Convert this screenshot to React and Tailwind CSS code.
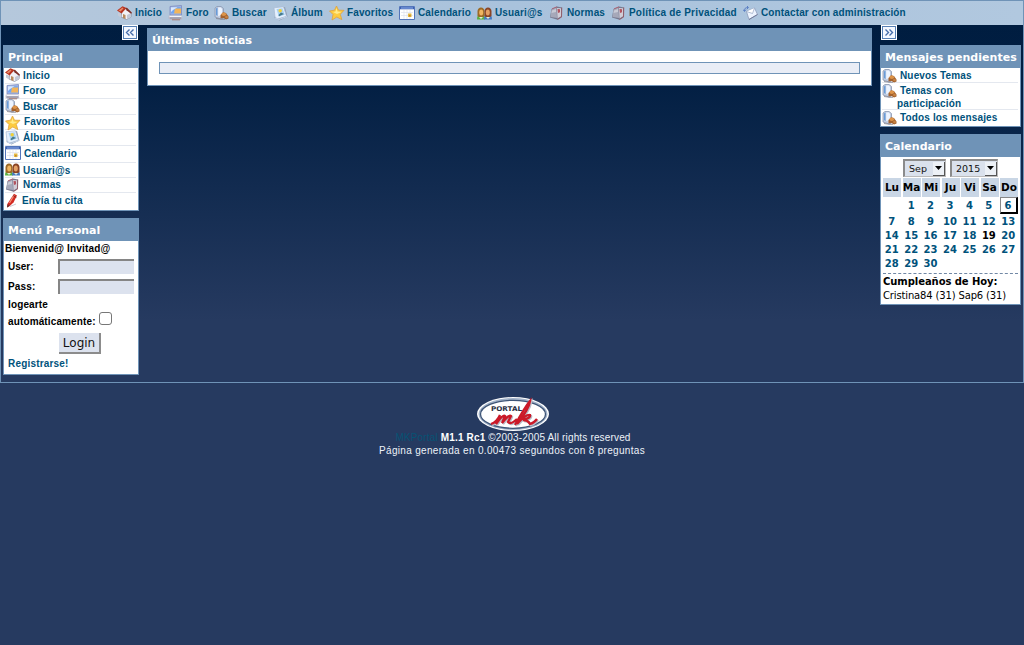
import React from "react";

const House = () => (
  <svg width="15" height="14" viewBox="0 0 15 14" className="block">
    <path d="M5 5 9 2.500 14.500 7 14 11 9.500 13.500 4 11z" fill="#f1f1f5" stroke="#83889a" strokeWidth=".7" />
    <path d="m10 9 4-2v4l-4 2.300z" fill="#c3c8d6" />
    <path d="M0 4.500 5.500.3 9.500 2 4.500 7.500z" fill="#b93420" />
    <path d="M1.500 4.500 5.500 1.500 6.500 2.500 3.500 5.500z" fill="#e58a6c" />
    <path d="M8.500 2 10 1.700l5 5-1 1-4.500-3.500z" fill="#7e3028" />
    <path d="m6 8 2.500 1v4L6 12z" fill="#b98a5c" />
    <path d="M1 6.500v3l3 2V7.500z" fill="#c7cbd8" />
  </svg>
);

const Forum = () => (
  <svg width="15" height="16" viewBox="0 0 15 16" className="block">
    <path d="M2 1.500 13.500.5v9.500H2z" fill="#a5b6e3" stroke="#7b8cc0" strokeWidth=".8" />
    <path d="M3 2.200h9.800v6.300H3z" fill="#70a6f2" />
    <path d="M7 3.500h6v5H6z" fill="#f3b55a" />
    <path d="M3 2.200h6.500L5 5 3 7z" fill="#dbe9ff" />
    <path d="M.8 10.500h12.700l.8 3.500-2 1H3L.5 13.500z" fill="#b9b6c4" />
    <path d="M1.500 11.500h12" stroke="#f3f3f8" strokeWidth="1.300" />
    <path d="M2 13h11" stroke="#8e8a9c" />
    <path d="M4 14.800h8" stroke="#a67b70" />
  </svg>
);

const Search = () => (
  <svg width="15" height="14" viewBox="0 0 15 14" className="block">
    <path d="M1 2 3 .5h4l2.500 2V12L7 13 1 11z" fill="#c2cee2" stroke="#8a97b0" strokeWidth=".8" />
    <path d="M2 2.500 3.500 1.500v8.500L2 9z" fill="#679bd9" />
    <path d="M4.200 1.500H7l1 1.300V9l-3.800 1z" fill="#edf4ff" />
    <path d="m6.500 9 2.500-2.800 3 .8 2.500 3.500v2L12 13.500 9.500 12l-3 .5z" fill="#a3622e" />
    <ellipse cx="9.800" cy="8.300" rx="2.300" ry="1.800" fill="#dd9449" />
    <ellipse cx="12.500" cy="11" rx="1.400" ry="1.200" fill="#c68343" />
    <path d="m2 12.500 6 .8h3" fill="none" stroke="#82818d" strokeWidth=".8" />
  </svg>
);

const Star = () => (
  <svg width="16" height="16" viewBox="0 0 16 16" className="block">
    <path d="m7.500 1 2 4.200 5.500.1-3.700 4 1.500 5.300-5-2.600L3 15l1-5.500L.5 6l5-.8z" fill="#fccb40" stroke="#dfa23e" strokeWidth=".8" />
    <path d="M7.500 3 8.500 6.500 12.500 7 8 9l-4-2 2.500-.6z" fill="#ffeb8c" />
  </svg>
);

const Album = () => (
  <svg width="15" height="15" viewBox="0 0 15 15" className="block">
    <path d="m3 4 9-3 2.500 9.500-8 4L1.500 12z" fill="#8f9db2" />
    <path d="M1 1.800 10.500.8l3 9.500-9 2.700L2 11z" fill="#e5f0fd" stroke="#a7b9d2" strokeWidth=".7" />
    <path d="m3.500 3 6-.7 2.300 6.500-6 1.800z" fill="#a8d1f3" />
    <circle cx="7.200" cy="4.800" r="1.700" fill="#f1cf35" />
    <path d="m5.500 9 2.500-2.500L11 8l-5 2.200z" fill="#467a8d" />
    <path d="m2 12 4 1.500 8-3" fill="none" stroke="#c4d5eb" />
  </svg>
);

const Calendar = () => (
  <svg width="16" height="14" viewBox="0 0 16 14" className="block">
    <path d="M.5.500h15v13H.5z" fill="#fff" stroke="#5375ba" />
    <path d="M1 1h14v2.300H1z" fill="#3c61b1" />
    <path d="M2 2h12" stroke="#91b0ec" />
    <path d="M2 6.500h12M2 9.500h12M5 4v9M8 4v9M11 4v9" stroke="#dde1ec" strokeWidth=".7" />
    <path d="M9 7.500h3.500V11H9z" fill="#e5b940" />
    <path d="M10 9h1.500v1.500H10z" fill="#bd842c" />
  </svg>
);

const Users = () => (
  <svg width="15" height="13" viewBox="0 0 15 13" className="block">
    <path d="M0 12.500Q0 7 4 7t4 5.500z" fill="#5bb041" />
    <path d="M7 12.500Q7 7 11 7t4 5.500z" fill="#4579c1" />
    <path d="M.5 9V4Q1 .5 4 .5T7.500 4v5L6 10H2z" fill="#9c6a26" />
    <path d="M7.500 9V4Q8 .5 11 .5T14.500 4v5L13 10H9z" fill="#8a4426" />
    <ellipse cx="4.200" cy="5.500" rx="2" ry="3" fill="#efb561" />
    <ellipse cx="10.800" cy="5.500" rx="2" ry="3" fill="#e3a066" />
    <path d="M2 10h4l-2 2zm7 0h4l-2 2z" fill="#e6edd7" />
  </svg>
);

const Rules = () => (
  <svg width="14" height="14" viewBox="0 0 14 14" className="block">
    <path d="M2.500 3 8 .5l5 1V11l-4.500 2.800L1 11.500z" fill="#77798f" />
    <path d="m2.500 3.500 5-2.200L8 12l-6.500-1z" fill="#a6a8b9" />
    <path d="M3 4.500 7 3v3L2.500 7z" fill="#c8cad5" />
    <path d="m8 2 4 .3v8L8.500 12.500z" fill="#d1cdd7" />
    <path d="m8.500 3 2.500.2v3L9 7z" fill="#b3535f" />
    <path d="m12.800 1.500-.3 9.500-4 2.500" fill="none" stroke="#9b5761" strokeWidth=".8" />
    <path d="m3 2.800 5-2" stroke="#b2596a" strokeWidth=".8" />
  </svg>
);

const Pen = () => (
  <svg width="14" height="15" viewBox="0 0 14 15" className="block">
    <path d="m5 13.500 6-2.500" stroke="#c9c9d2" />
    <path d="m9 .8 3 1.700L8.500 9.500 5 12.800 2 14.500l.5-3.700z" fill="#d32b22" />
    <path d="m9.200 2-4.700 8" stroke="#f5937d" strokeWidth="1.200" />
    <path d="m8 2.500 3.300 2" stroke="#8e2922" />
    <path d="m2.500 11-.5 3.500 2.700-1.500z" fill="#6d3332" />
  </svg>
);

const Mail = () => (
  <svg width="15" height="14" viewBox="0 0 15 14" className="block">
    <path d="m3.500 5.500 8-3.500 3 6.500-8.500 5z" fill="#edf4ff" stroke="#8794b3" strokeWidth=".7" />
    <path d="m3.500 5.500 6 2L11.500 2" fill="#fff" stroke="#94a4c1" strokeWidth=".7" />
    <path d="M1.500 5Q1 1.500 5 1.500M4 0l1.500 1.500L4 3M0 3.500l1.500 2 1.500-2" fill="none" stroke="#5c80c4" />
    <path d="m6 13.500 8.500-5" stroke="#727b99" />
  </svg>
);

const NAV = [
  [House, "Inicio", "w-[51px]", "w-[18px]"],
  [Forum, "Foro", "w-[46px]", "w-[18px]"],
  [Search, "Buscar", "w-[59px]", "w-[18px]"],
  [Album, "Álbum", "w-[56px]", "w-[18px]"],
  [Star, "Favoritos", "w-[70px]", "w-[18px]"],
  [Calendar, "Calendario", "w-[78px]", "w-[19px]"],
  [Users, "Usuari@s", "w-[72px]", "w-[18px]"],
  [Rules, "Normas", "w-[62px]", "w-[18px]"],
  [Rules, "Política de Privacidad", "w-[132px]", "w-[18px]"],
  [Mail, "Contactar con administración", "w-[164px]", "w-[18px]"],
];

const MENU = [
  [House, "Inicio", "h-[16px]", "w-[18px]", "pt-px"],
  [Forum, "Foro", "h-[15px]", "w-[18px]", "pt-0"],
  [Search, "Buscar", "h-[16px]", "w-[18px]", "pt-px"],
  [Star, "Favoritos", "h-[15px]", "w-[19px]", "pt-0"],
  [Album, "Álbum", "h-[16px]", "w-[18px]", "pt-px"],
  [Calendar, "Calendario", "h-[17px]", "w-[19px]", "pt-px"],
  [Users, "Usuari@s", "h-[15px]", "w-[18px]", "pt-px"],
  [Rules, "Normas", "h-[15px]", "w-[18px]", "pt-0"],
  [Pen, "Envía tu cita", "h-[16px]", "w-[17px]", "pt-px"],
];

const WEEKS = [
  ["", 1, 2, 3, 4, 5, 6],
  [7, 8, 9, 10, 11, 12, 13],
  [14, 15, 16, 17, 18, 19, 20],
  [21, 22, 23, 24, 25, 26, 27],
  [28, 29, 30, "", "", "", ""],
];

const Panel = ({ title, className, children }) => (
  <section className={`flex flex-col border border-[#6f93b7] bg-white ${className}`}>
    <h2 className="h-[22px] shrink-0 whitespace-nowrap bg-[#6f93b7] pl-1 pt-px font-['DejaVu_Sans',sans-serif] text-[11px] font-bold leading-[21px] tracking-[0.03px] text-white">
      {title}
    </h2>
    {children}
  </section>
);

const Toggle = ({ flip }) => (
  <button className="flex h-[15px] w-4 items-center justify-center border border-white bg-[#557fb5] p-px">
    <svg width="12" height="11" viewBox="0 0 12 11" className={flip ? "-scale-x-100" : ""}>
      <path d="M0 0h12v11H0z" fill="#f4f8ff" />
      <path d="M5.500 2.500 2.500 5.500l3 3M9.500 2.500l-3 3 3 3" fill="none" stroke="#466daa" strokeWidth="1.400" />
    </svg>
  </button>
);

const Select = ({ value, className }) => (
  <div className={`flex h-[18px] items-center border-2 border-b border-r border-[#8b8b8b] border-b-[#bbb] border-r-[#bbb] bg-[#dae1ec] pl-1 font-['DejaVu_Sans',sans-serif] text-[9.500px] leading-none text-[#111] ${className}`}>
    <span className="flex-1">{value}</span>
    <span className="flex h-[14px] w-[12px] items-center justify-center border-b border-r border-[#555] bg-[#edf1f6]">
      <svg width="7" height="4" viewBox="0 0 7 4"><path d="M0 0h7L3.500 4z" /></svg>
    </span>
  </div>
);

const Logo = () => (
  <svg width="72" height="34" viewBox="0 0 72 34" className="block">
    <ellipse cx="36" cy="17" rx="36" ry="17" fill="#fff" />
    <ellipse cx="36" cy="17" rx="34.500" ry="16" fill="#a3b3c9" />
    <ellipse cx="36" cy="17.300" rx="32.500" ry="14" fill="#fff" stroke="#3e5577" strokeWidth="1.300" />
    <text x="14" y="14" fontFamily="DejaVu Sans" fontSize="6.500" fontWeight="bold" textLength="31" lengthAdjust="spacingAndGlyphs" fill="#293044">PORTAL</text>
    <path d="M14 27q6-2 9-9l-4 9q7-10 9-8l-3 7q7-9 9-7l-3 6q3 3 9-3M38 28Q48 10 53 4 52 12 40 27q9-10 13-9 1 3-7 5 5 0 7 4 4-1 7-5" fill="none" stroke="#b9bcc8" strokeWidth="2.400" transform="translate(1 1)" />
    <path d="M14 27q6-2 9-9l-4 9q7-10 9-8l-3 7q7-9 9-7l-3 6q3 3 9-3M38 28Q48 10 53 4 52 12 40 27q9-10 13-9 1 3-7 5 5 0 7 4 4-1 7-5" fill="none" stroke="#cb1928" strokeWidth="2.300" />
  </svg>
);

export default function App() {
  return (
    <div className="h-[645px] w-[1024px] overflow-hidden bg-[#263a60] font-['Liberation_Sans',Arial,sans-serif] text-[10px] text-black">
      <div className="flex h-[383px] flex-col border border-[#6f93b7] bg-[linear-gradient(#001d40_24px,#021f43_80px,#263a60_320px)]">
        <nav className="flex h-6 shrink-0 items-center bg-[linear-gradient(90deg,#b5c8dc,#a9c2dc_50%,#b1c8df)] pl-[116px] font-bold tracking-[0.13px] text-[#00527b]">
          {NAV.map(([Icon, label, width, slot]) => (
            <a key={label} className={`flex shrink-0 items-center whitespace-nowrap ${width}`}>
              <span className={`shrink-0 ${slot}`}><Icon /></span>
              <span className={`leading-[12px] ${label.startsWith("Pol") ? "tracking-[0.2px]" : ""}`}>{label}</span>
            </a>
          ))}
        </nav>

        <div className="flex flex-1 items-start">
          <aside className="flex w-[144px] shrink-0 flex-col pl-[2px]">
            <div className="ml-[119px] h-5"><Toggle /></div>
            <Panel title="Principal" className="h-[166px] w-[136px]">
              <ul className="pl-px pr-0.5">
                {MENU.map(([Icon, label, height, slot, nudge]) => (
                  <li key={label} className={`flex border-b border-[#e4e8ef] font-bold tracking-[0.13px] text-[#00527b] last:border-b-0 ${height}`}>
                    <span className={`shrink-0 ${slot}`}><Icon /></span>
                    <span className={`leading-[13px] ${nudge}`}>{label}</span>
                  </li>
                ))}
              </ul>
            </Panel>
            <Panel title="Menú Personal" className="mt-[7px] h-[157px] w-[136px] font-bold">
              <p className="pl-px pt-0.5 leading-[12px] tracking-[0.16px]">Bienvenid@ Invitad@</p>
              <div className="mt-px flex h-5 items-center pl-1">
                <label className="w-[50px]">User:</label>
                <input className="h-[15px] w-[76px] border-2 border-b-0 border-r-0 border-[#858585] bg-[#dce2ee] outline-none" />
              </div>
              <div className="flex h-5 items-center pl-1">
                <label className="w-[50px] tracking-[0.15px]">Pass:</label>
                <input className="h-[15px] w-[76px] border-2 border-b-0 border-r-0 border-[#858585] bg-[#dce2ee] outline-none" />
              </div>
              <p className="pl-1 pt-0.5 leading-[14px] tracking-[0.13px]">logearte</p>
              <div className="flex h-[18px] pl-1">
                <span className="pt-[3px] leading-[14px] tracking-[0.13px]">automáticamente:</span>
                <span className="ml-[3px] h-[13px] w-[13px] rounded-[3px] border border-[#777] bg-white" />
              </div>
              <button className="ml-[55px] mt-[3px] h-[21px] w-[42px] shrink-0 border-b-2 border-r-2 border-[#8c8c8c] bg-[#dce2ee] font-['DejaVu_Sans',sans-serif] text-[12px] font-normal leading-[18px] text-[#111]">Login</button>
              <a className="mt-[3px] pl-1 leading-[13px] tracking-[0.18px] text-[#00527b]">Registrarse!</a>
            </Panel>
          </aside>

          <main className="mt-[3px] w-[735px] shrink-0 pl-[2px]">
            <Panel title="Últimas noticias" className="h-[58px] w-[725px]">
              <div className="ml-[11px] mt-[11px] h-3 w-[701px] border border-[#6f93b7] bg-[#e9edf6]" />
            </Panel>
          </main>

          <aside className="flex w-[142px] shrink-0 flex-col">
            <div className="ml-px h-5"><Toggle flip /></div>
            <Panel title="Mensajes pendientes" className="h-[82px] w-[141px]">
              <ul className="pl-px pr-0.5 font-bold tracking-[0.15px] text-[#00527b]">
                <li className="flex h-[15px] border-b border-[#e4e8ef]">
                  <span className="w-[18px] pt-px"><Search /></span><span className="pt-px leading-[13px]">Nuevos Temas</span>
                </li>
                <li className="flex h-[27px] border-b border-[#e4e8ef]">
                  <span className="w-[15px] pt-px"><Search /></span><span className="pt-px leading-[13px]"><span className="ml-[3px]">Temas con</span><br />participación</span>
                </li>
                <li className="flex h-[15px]">
                  <span className="w-[18px] pt-px"><Search /></span><span className="pt-px leading-[13px]">Todos los mensajes</span>
                </li>
              </ul>
            </Panel>
            <Panel title="Calendario" className="mt-[7px] h-[171px] w-[141px] font-['DejaVu_Sans',sans-serif]">
              <div className="ml-[22px] mt-0.5 flex shrink-0 gap-[4px]">
                <Select value="Sep" className="w-[43px]" />
                <Select value="2015" className="w-[48px]" />
              </div>
              <div className="ml-[2px] mt-px grid h-[18px] w-[135px] shrink-0 grid-cols-7 gap-[1.500px] text-center text-[10.500px] font-bold leading-[19px]">
                {["Lu", "Ma", "Mi", "Ju", "Vi", "Sa", "Do"].map((day) => <span key={day} className="bg-[#c9d6e5]">{day}</span>)}
              </div>
              <div className="ml-px w-[136px] text-center text-[10px] font-bold text-[#00527b]">
                {WEEKS.map((week, row) => (
                  <div key={row} className={`grid grid-cols-7 items-center ${row === 0 ? "h-[18px]" : "h-[14px]"}`}>
                    {week.map((day, col) => (
                      <span key={col} className={day === 6 ? "ml-px h-[17px] w-[18px] border border-b-2 border-r-2 border-[#888] border-b-black border-r-black leading-[16px]" : day === 19 ? "text-black" : ""}>{day}</span>
                    ))}
                  </div>
                ))}
              </div>
              <div className="mx-[2px] mt-[3px] border-t border-dashed border-[#7188a5] pt-px text-[10px] leading-[14px]">
                <p className="font-bold tracking-[-0.06px]">Cumpleaños de Hoy:</p>
                <p className="tracking-[-0.15px]">Cristina84 (31) Sap6 (31)</p>
              </div>
            </Panel>
          </aside>
        </div>
      </div>

      <footer className="flex flex-col items-center pt-[14px] text-center leading-[13px] text-[#edf2f8]">
        <div className="pl-px"><Logo /></div>
        <p className="pl-0.5 tracking-[0.16px]"><span className="text-[#075374]">MKPortal</span> <b className="text-white">M1.1 Rc1</b> ©2003-2005 All rights reserved</p>
        <p className="tracking-[0.32px]">Página generada en 0.00473 segundos con 8 preguntas</p>
      </footer>
    </div>
  );
}
